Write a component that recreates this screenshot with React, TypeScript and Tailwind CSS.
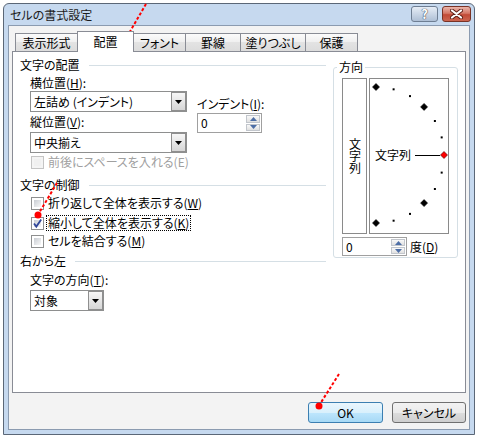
import React from 'react'

type Kids = { children?: React.ReactNode; className?: string }

function Section({ label, className = '' }: { label: string; className?: string }) {
  return (
    <div className={'flex h-[14px] items-center ' + className}>
      <span className="leading-[14px]">{label}</span>
      <div className="ml-[9px] h-px flex-1 bg-[#d5dfe5]" />
    </div>
  )
}

function Combo({ value, className = '' }: { value: string; className?: string }) {
  return (
    <div className={'flex h-[21px] items-stretch border border-[#8e8f8f] bg-white ' + className}>
      <span className="flex-1 pl-[3px] leading-[19px]">{value}</span>
      <div className="flex w-[15px] items-center justify-center border border-[#8f8f8f] bg-linear-to-b from-[#f7f7f7] to-[#d6d6d6]">
        <svg width="7" height="4" viewBox="0 0 7 4">
          <path d="M0 0H7L3.5 4Z" fill="#000" />
        </svg>
      </div>
    </div>
  )
}

function SpinHalf({ up }: { up?: boolean }) {
  return (
    <div className="flex flex-1 items-center justify-center border border-[#c2c6cc] bg-linear-to-b from-[#f9f9f9] to-[#e0e0e0]">
      <svg width="7" height="4" viewBox="0 0 7 4">
        <path d={up ? 'M3.5 0L7 4H0Z' : 'M0 0H7L3.5 4Z'} fill="#4d6ea6" />
      </svg>
    </div>
  )
}

function Spin({ className = '' }: { className?: string }) {
  return (
    <div className={'flex w-[65px] border border-[#a0a0a0] bg-white ' + className}>
      <span className="flex-1 pl-[3px] leading-[17px]">0</span>
      <div className="flex w-[16px] flex-col gap-px p-px">
        <SpinHalf up />
        <SpinHalf />
      </div>
    </div>
  )
}

function Check({ checked, disabled }: { checked?: boolean; disabled?: boolean }) {
  return (
    <div
      className={
        disabled
          ? 'relative h-[13px] w-[13px] border border-[#c4c4c4] bg-[#f4f4f4] p-[2px]'
          : 'relative h-[13px] w-[13px] border border-[#8e8f8f] bg-white p-[2px]'
      }
    >
      <div className={disabled ? 'h-full w-full bg-[#f0f0f0]' : 'h-full w-full bg-linear-to-br from-[#c9cdd3] to-[#f8f8f8]'} />
      {checked && (
        <svg className="absolute -left-px -top-px" width="13" height="13" viewBox="0 0 13 13">
          <path d="M3 6.5L5.3 9.6L10.2 2.6" fill="none" stroke="#31479a" strokeWidth="1.8" />
        </svg>
      )}
    </div>
  )
}

function CheckRow({
  children,
  className = '',
  checked,
  disabled,
  focus,
}: Kids & { checked?: boolean; disabled?: boolean; focus?: boolean }) {
  return (
    <div className={'ml-[11px] flex h-[16px] items-center ' + className}>
      <Check checked={checked} disabled={disabled} />
      <span
        className={
          (focus ? 'border-black ' : 'border-transparent ') +
          (disabled ? 'text-[#a0a0a0] ' : '') +
          'ml-[2px] border border-dotted px-px leading-[14px]'
        }
      >
        {children}
      </span>
    </div>
  )
}

function Key({ children }: Kids) {
  return <span className="underline underline-offset-[1px]">{children}</span>
}

function Dial() {
  const angles = [90, 75, 60, 45, 30, 15, 0, -15, -30, -45, -60, -75, -90]
  return (
    <div className="relative h-[156px] w-[80px] border border-[#8a8a8a] bg-white">
      <svg className="absolute left-0 top-0" width="78" height="154" viewBox="0 0 78 154">
        {angles.map((a) => {
          const r = (a * Math.PI) / 180
          const x = 6 + 68 * Math.cos(r)
          const y = 76 - 68 * Math.sin(r)
          if (a % 45 === 0) {
            const red = a === 0
            return (
              <path
                key={a}
                d={`M${x} ${y - 3.5}L${x + 3.5} ${y}L${x} ${y + 3.5}L${x - 3.5} ${y}Z`}
                fill={red ? '#ff0000' : '#000'}
                stroke={red ? '#400' : '#000'}
                strokeWidth="0.6"
              />
            )
          }
          return <rect key={a} x={x - 1} y={y - 1} width="2" height="2" fill="#000" />
        })}
        <text x="5" y="81" fontSize="12" fontFamily="Noto Sans CJK JP, sans-serif" fill="#000">
          文字列
        </text>
        <line x1="45" y1="76.5" x2="70" y2="76.5" stroke="#000" strokeWidth="1" />
      </svg>
    </div>
  )
}

function Panel() {
  return (
    <div className="flex h-[342px] border border-[#898c95] bg-white">
      <div className="flex w-[313px] flex-col pl-[7px]">
        <Section label="文字の配置" className="mt-[6px]" />
        <div className="ml-[10px] flex">
          <div className="flex w-[157px] flex-col">
            <div className="mt-[4px] h-[14px] leading-[14px]">
              横位置(<Key>H</Key>):
            </div>
            <Combo className="mt-[1px] w-[157px]" value="左詰め (インデント)" />
            <div className="mt-[3px] h-[14px] leading-[14px]">
              縦位置(<Key>V</Key>):
            </div>
            <Combo className="mt-[3px] w-[157px]" value="中央揃え" />
          </div>
          <div className="ml-[10px] flex flex-col">
            <div className="mt-[25px] h-[14px] leading-[14px]">
              インデント(<Key>I</Key>):
            </div>
            <Spin className="mt-[2px] h-[20px]" />
          </div>
        </div>
        <CheckRow className="mt-px" disabled>
          前後にスペースを入れる(E)
        </CheckRow>
        <Section label="文字の制御" className="mt-[8px]" />
        <CheckRow className="mt-[3px]">
          折り返して全体を表示する(<Key>W</Key>)
        </CheckRow>
        <CheckRow className="mt-[4px]" checked focus>
          縮小して全体を表示する(<Key>K</Key>)
        </CheckRow>
        <CheckRow className="mt-[2px]">
          セルを結合する(<Key>M</Key>)
        </CheckRow>
        <Section label="右から左" className="mt-[5px]" />
        <div className="ml-[10px] mt-[5px] h-[14px] leading-[14px]">
          文字の方向(<Key>T</Key>):
        </div>
        <Combo className="ml-[10px] mt-[3px] w-[74px]" value="対象" />
      </div>

      <fieldset className="ml-[7px] mt-[8px] w-[125px] self-start rounded-[3px] border border-[#d5dfe5] pb-px">
        <legend className="ml-[3px] px-[2px] leading-[14px]">方向</legend>
        <div className="px-[8px]">
          <div className="mt-[4px] flex gap-[2px]">
            <div className="flex h-[156px] w-[25px] items-center justify-center border border-[#8a8a8a] bg-white">
              <span className="leading-[14px] [writing-mode:vertical-rl]">文字列</span>
            </div>
            <Dial />
          </div>
          <div className="mt-[3px] flex items-center">
            <Spin className="h-[19px]" />
            <span className="ml-[3px] leading-[14px]">
              度(<Key>D</Key>)
            </span>
          </div>
        </div>
      </fieldset>
    </div>
  )
}

const tabs = [
  { label: '表示形式', w: 'w-[63px]' },
  { label: '配置', w: 'w-[57px]', active: true },
  { label: 'フォント', w: 'w-[53px]' },
  { label: '罫線', w: 'w-[56px]' },
  { label: '塗りつぶし', w: 'w-[66px]' },
  { label: '保護', w: 'w-[53px]' },
]

function Tabs() {
  return (
    <div className="relative z-10 flex h-[20px] items-start pl-[3px]">
      {tabs.map((t, i) => (
        <div
          key={t.label}
          className={
            t.w +
            (i > 0 ? ' -ml-px' : '') +
            (t.active
              ? ' relative z-10 h-[21px] border border-b-0 border-[#898c95] bg-white text-center leading-[20px]'
              : ' mt-[2px] h-[18px] border border-b-0 border-[#898c95] bg-[linear-gradient(to_bottom,#fbfbfb,#efefef_50%,#e3e3e3_50%,#dcdcdc)] pt-px text-center leading-[16px]')
          }
        >
          {t.label}
        </div>
      ))}
    </div>
  )
}

function TitleBar() {
  return (
    <div className="flex h-[21px] items-start pl-[6px] pr-[3px]">
      <div className="flex-1 leading-[21px] text-[#1b1b1b]">セルの書式設定</div>
      <div className="mt-[2px] flex h-[16px] w-[27px] items-center justify-center rounded-[3px] border border-[#6e7e93] bg-linear-to-b from-[#e6edf6] to-[#aebfd5]">
        <span className="text-[13px] font-bold leading-[14px] text-white [text-shadow:0_0_1px_#334,0_0_1px_#334]">?</span>
      </div>
      <div className="ml-[4px] mt-[2px] flex h-[16px] w-[29px] items-center justify-center rounded-[3px] border border-[#7a3326] bg-[linear-gradient(to_bottom,#eab5aa,#d57766_45%,#c24a36_55%,#cb6550)]">
        <svg width="13" height="10" viewBox="0 0 13 10">
          <path d="M2 1.5L11 8.5M11 1.5L2 8.5" stroke="#5e1f16" strokeWidth="4" strokeLinecap="round" />
          <path d="M2 1.5L11 8.5M11 1.5L2 8.5" stroke="#fff" strokeWidth="2.2" strokeLinecap="round" />
        </svg>
      </div>
    </div>
  )
}

function Annotations() {
  return (
    <svg className="pointer-events-none absolute left-0 top-0" width="477" height="435">
      <g stroke="#ff0000" strokeWidth="2" strokeDasharray="3 2" fill="none">
        <line x1="146" y1="4" x2="128" y2="35" />
        <line x1="57" y1="183" x2="39" y2="213" />
        <line x1="339" y1="374" x2="320" y2="404" />
      </g>
      <g fill="#ff0000">
        <circle cx="127" cy="37" r="3.5" />
        <circle cx="38" cy="215" r="3.5" />
        <circle cx="319" cy="406" r="3.5" />
      </g>
    </svg>
  )
}

export default function App() {
  return (
    <div className="relative h-[435px] w-[477px] overflow-hidden bg-white font-['Noto_Sans_CJK_JP',sans-serif] text-[12px] text-black [font-feature-settings:'palt']">
      <div className="ml-[3px] mt-[3px] flex h-[432px] w-[472px] flex-col rounded-t-[6px] border border-[#5b6777] bg-[#c6d9ef]">
        <TitleBar />
        <div className="mx-[4px] flex h-[405px] flex-col border border-[#8b9bb0] bg-[#f3f3f3] px-[3px] pt-[5px]">
          <Tabs />
          <Panel />
          <div className="mt-[9px] flex justify-end gap-[9px]">
            <button className="h-[21px] w-[75px] rounded-[3px] border border-[#3c7fb1] bg-[linear-gradient(to_bottom,#eaf6fd,#d9f0fc_50%,#bee6fd_50%,#a7d9f5)] leading-[19px]">
              OK
            </button>
            <button className="h-[21px] w-[74px] rounded-[3px] border border-[#707070] bg-[linear-gradient(to_bottom,#f2f2f2,#ebebeb_50%,#dddddd_50%,#cfcfcf)] leading-[19px]">
              キャンセル
            </button>
          </div>
        </div>
      </div>
      <Annotations />
    </div>
  )
}
